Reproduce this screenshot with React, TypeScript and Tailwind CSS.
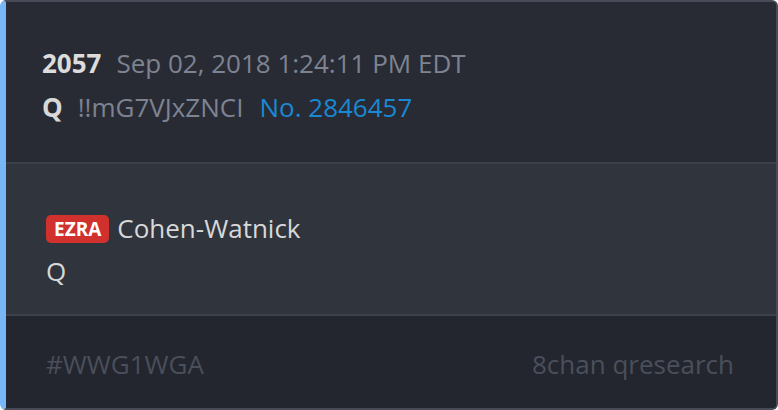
export default function App() {
  return (
    <div className="w-[778px] h-[410px] bg-white font-['Open_Sans',sans-serif]">
      <div className="w-full h-full flex flex-col overflow-hidden rounded-[6px] border-2 border-l-[6px] border-[#464b57] border-l-[#78b7f6] bg-[#282b34]">
        <div className="pl-[36px] pt-[39px] pb-[33px] bg-[#282b34]">
          <div className="flex items-baseline h-[44px] leading-[44px]">
            <span className="text-[26px] font-bold text-[#dcdcdc]">2057</span>
            <span className="ml-[15px] text-[26px] text-[#7e8391]">Sep 02, 2018 1:24:11 PM EDT</span>
          </div>
          <div className="flex items-baseline h-[44px] leading-[44px]">
            <span className="text-[26px] font-bold text-[#d8d8d8]">Q</span>
            <span className="ml-[15px] text-[26px] text-[#7e8391]">!!mG7VJxZNCI</span>
            <span className="ml-[16px] text-[26px] text-[#1a88d3]">No. 2846457</span>
          </div>
        </div>
        <div className="border-t-2 border-[#3b404b] bg-[#2f343d] pl-[40px] pt-[43px] pb-[21px]">
          <div className="flex items-center h-[43px]">
            <span className="rounded-[5px] bg-[#d0312d] px-[8px] h-[28px] leading-[28px] text-[19px] font-bold text-white">EZRA</span>
            <span className="ml-[8px] text-[26px] text-[#d8d8d8]">Cohen-Watnick</span>
          </div>
          <div className="flex items-center h-[43px] text-[26px] text-[#d8d8d8]">Q</div>
        </div>
        <div className="flex-1 flex items-center justify-between border-t-2 border-[#3b404b] bg-[#23262e] pl-[40px] pr-[42px] pt-[4px] text-[26px] text-[#4a4f5b]">
          <span>#WWG1WGA</span>
          <span>8chan qresearch</span>
        </div>
      </div>
    </div>
  )
}
